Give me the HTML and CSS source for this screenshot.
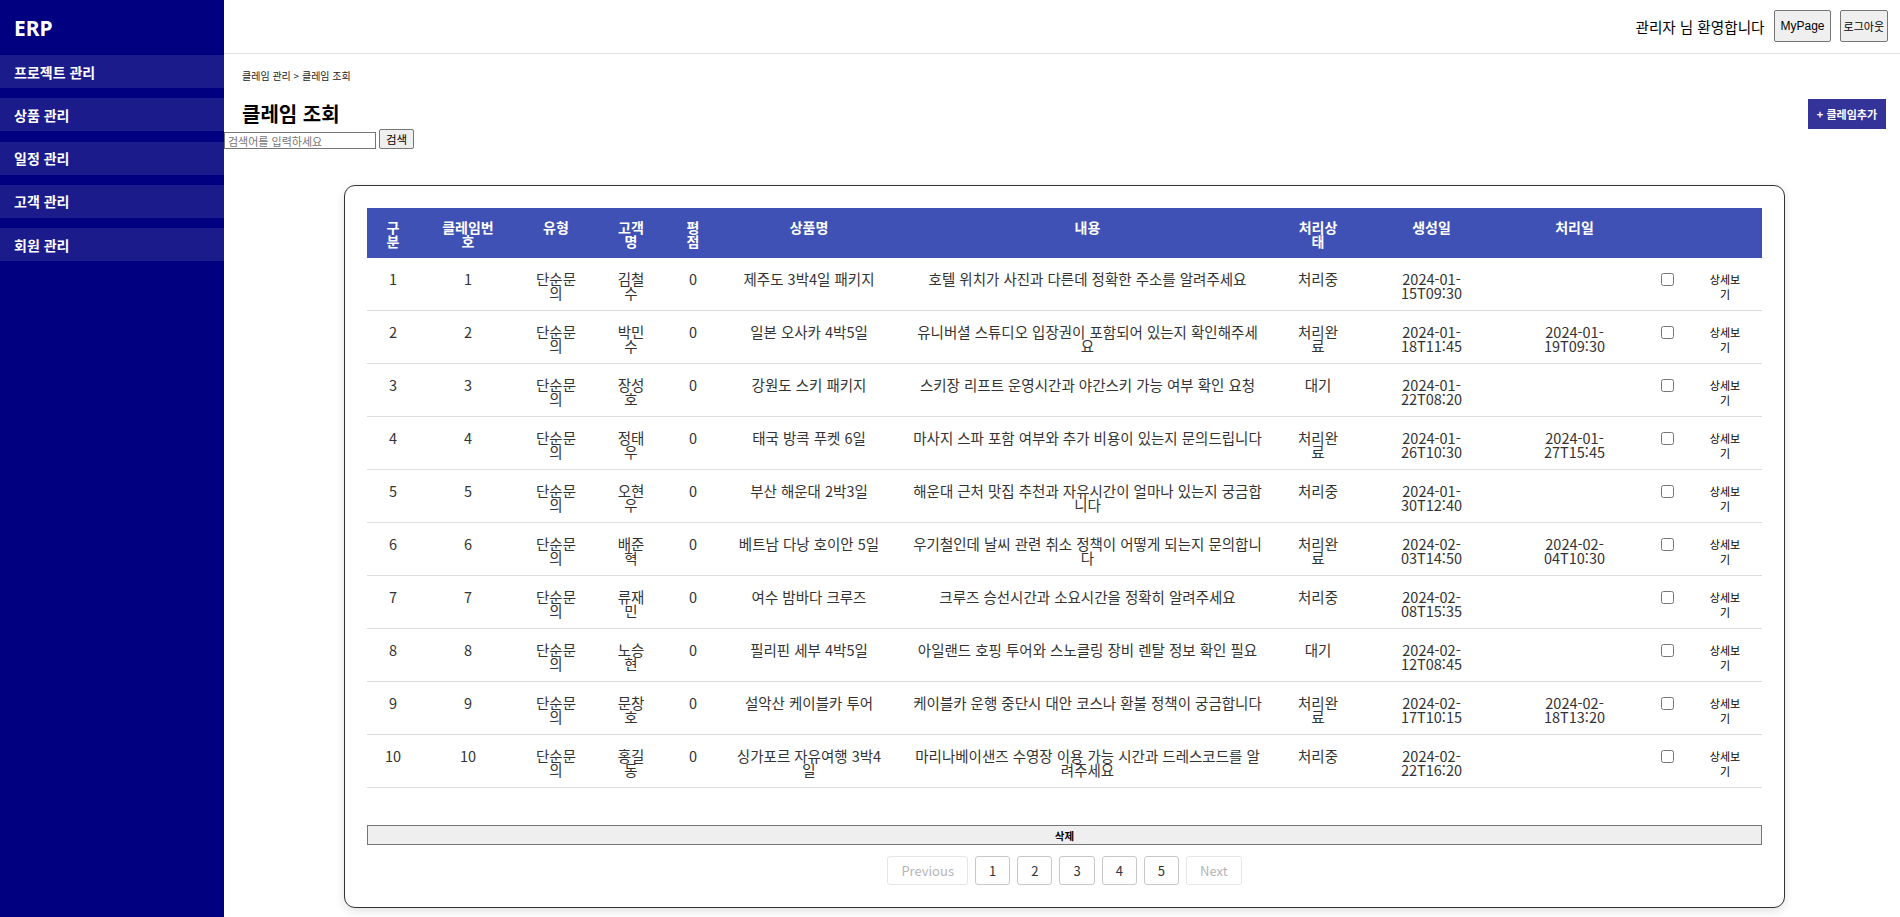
FILE: index.html
```html
<!DOCTYPE html>
<html lang="ko">
<head>
<meta charset="utf-8">
<title>클레임 조회</title>
<link rel="stylesheet" href="styles.css">
</head>
<body>
<aside class="sidebar">
  <div class="logo">ERP</div>
  <nav class="menu">
    <a class="menu-item">프로젝트 관리</a>
    <a class="menu-item">상품 관리</a>
    <a class="menu-item">일정 관리</a>
    <a class="menu-item">고객 관리</a>
    <a class="menu-item">회원 관리</a>
  </nav>
</aside>
<main class="main">
  <header class="topbar">
    <span class="welcome">관리자 님 환영합니다</span>
    <button class="top-btn">MyPage</button>
    <button class="top-btn top-btn-ko">로그아웃</button>
  </header>
  <section class="page-head">
    <div class="breadcrumb">클레임 관리 &gt; 클레임 조회</div>
    <div class="title-row">
      <h3 class="title">클레임 조회</h3>
      <button class="add-btn">+ 클레임추가</button>
    </div>
  </section>
  <form class="search">
    <input class="search-input" type="text" placeholder="검색어를 입력하세요">
    <button class="search-btn" type="button">검색</button>
  </form>
  <div class="card">
    <table class="claims">
      <thead>
        <tr>
          <th>구분</th><th>클레임번호</th><th>유형</th><th>고객명</th><th>평점</th><th>상품명</th><th>내용</th><th>처리상태</th><th>생성일</th><th>처리일</th><th></th><th></th>
        </tr>
      </thead>
      <tbody>
        <tr><td>1</td><td>1</td><td>단순문의</td><td>김철수</td><td>0</td><td>제주도 3박4일 패키지</td><td>호텔 위치가 사진과 다른데 정확한 주소를 알려주세요</td><td>처리중</td><td>2024-01-15T09:30</td><td></td><td><input type="checkbox" class="chk"></td><td><button class="detail">상세보기</button></td></tr>
        <tr><td>2</td><td>2</td><td>단순문의</td><td>박민수</td><td>0</td><td>일본 오사카 4박5일</td><td>유니버셜 스튜디오 입장권이 포함되어 있는지 확인해주세요</td><td>처리완료</td><td>2024-01-18T11:45</td><td>2024-01-19T09:30</td><td><input type="checkbox" class="chk"></td><td><button class="detail">상세보기</button></td></tr>
        <tr><td>3</td><td>3</td><td>단순문의</td><td>장성호</td><td>0</td><td>강원도 스키 패키지</td><td>스키장 리프트 운영시간과 야간스키 가능 여부 확인 요청</td><td>대기</td><td>2024-01-22T08:20</td><td></td><td><input type="checkbox" class="chk"></td><td><button class="detail">상세보기</button></td></tr>
        <tr><td>4</td><td>4</td><td>단순문의</td><td>정태우</td><td>0</td><td>태국 방콕 푸켓 6일</td><td>마사지 스파 포함 여부와 추가 비용이 있는지 문의드립니다</td><td>처리완료</td><td>2024-01-26T10:30</td><td>2024-01-27T15:45</td><td><input type="checkbox" class="chk"></td><td><button class="detail">상세보기</button></td></tr>
        <tr><td>5</td><td>5</td><td>단순문의</td><td>오현우</td><td>0</td><td>부산 해운대 2박3일</td><td>해운대 근처 맛집 추천과 자유시간이 얼마나 있는지 궁금합니다</td><td>처리중</td><td>2024-01-30T12:40</td><td></td><td><input type="checkbox" class="chk"></td><td><button class="detail">상세보기</button></td></tr>
        <tr><td>6</td><td>6</td><td>단순문의</td><td>배준혁</td><td>0</td><td>베트남 다낭 호이안 5일</td><td>우기철인데 날씨 관련 취소 정책이 어떻게 되는지 문의합니다</td><td>처리완료</td><td>2024-02-03T14:50</td><td>2024-02-04T10:30</td><td><input type="checkbox" class="chk"></td><td><button class="detail">상세보기</button></td></tr>
        <tr><td>7</td><td>7</td><td>단순문의</td><td>류재민</td><td>0</td><td>여수 밤바다 크루즈</td><td>크루즈 승선시간과 소요시간을 정확히 알려주세요</td><td>처리중</td><td>2024-02-08T15:35</td><td></td><td><input type="checkbox" class="chk"></td><td><button class="detail">상세보기</button></td></tr>
        <tr><td>8</td><td>8</td><td>단순문의</td><td>노승현</td><td>0</td><td>필리핀 세부 4박5일</td><td>아일랜드 호핑 투어와 스노클링 장비 렌탈 정보 확인 필요</td><td>대기</td><td>2024-02-12T08:45</td><td></td><td><input type="checkbox" class="chk"></td><td><button class="detail">상세보기</button></td></tr>
        <tr><td>9</td><td>9</td><td>단순문의</td><td>문창호</td><td>0</td><td>설악산 케이블카 투어</td><td>케이블카 운행 중단시 대안 코스나 환불 정책이 궁금합니다</td><td>처리완료</td><td>2024-02-17T10:15</td><td>2024-02-18T13:20</td><td><input type="checkbox" class="chk"></td><td><button class="detail">상세보기</button></td></tr>
        <tr><td>10</td><td>10</td><td>단순문의</td><td>홍길동</td><td>0</td><td>싱가포르 자유여행 3박4일</td><td>마리나베이샌즈 수영장 이용 가능 시간과 드레스코드를 알려주세요</td><td>처리중</td><td>2024-02-22T16:20</td><td></td><td><input type="checkbox" class="chk"></td><td><button class="detail">상세보기</button></td></tr>
      </tbody>
    </table>
    <button class="delete-btn">삭제</button>
    <div class="pager">
      <button class="page-btn disabled">Previous</button>
      <button class="page-btn">1</button>
      <button class="page-btn">2</button>
      <button class="page-btn">3</button>
      <button class="page-btn">4</button>
      <button class="page-btn">5</button>
      <button class="page-btn disabled">Next</button>
    </div>
  </div>
</main>
</body>
</html>
```

FILE: styles.css
```css
* { box-sizing: border-box; }

html, body {
  margin: 0;
  padding: 0;
  height: 100%;
}

body {
  display: flex;
  font-family: "Noto Sans CJK KR", "Noto Sans", sans-serif;
  color: #000;
  background: #fff;
  overflow: hidden;
}

/* Sidebar */
.sidebar {
  width: 224px;
  flex: 0 0 224px;
  height: 917px;
  background: #000080;
  color: #fff;
}

.logo {
  height: 55px;
  display: flex;
  align-items: center;
  padding-left: 14px;
  font-family: "Noto Sans", sans-serif;
  font-size: 21px;
  font-weight: 700;
}

.menu {
  display: flex;
  flex-direction: column;
  gap: 10.3px;
}

.menu-item {
  height: 33px;
  display: flex;
  align-items: center;
  padding-left: 14px;
  background: #1b1b8b;
  color: #fff;
  font-size: 14px;
  font-weight: 700;
}

/* Main */
.main {
  flex: 1;
  min-width: 0;
}

.topbar {
  height: 54px;
  display: flex;
  justify-content: flex-end;
  align-items: center;
  padding-right: 12px;
  padding-bottom: 1px;
  border-bottom: 1px solid #e2e2e2;
}

.welcome {
  font-size: 14.6px;
  margin-right: 10px;
}

.top-btn {
  height: 32px;
  padding: 0 5px;
  font-family: "Liberation Sans", "Noto Sans CJK KR", sans-serif;
  font-size: 12px;
  color: #000;
  background: #efefef;
  border: 1px solid #767676;
  border-radius: 2px;
}

.top-btn-ko {
  margin-left: 9px;
  font-family: "Noto Sans CJK KR", sans-serif;
  font-size: 11px;
  padding: 0 3px;
}

.page-head {
  padding: 15px 14px 0 18px;
}

.breadcrumb {
  font-size: 10px;
  line-height: 14px;
  color: #222;
  margin-bottom: 16px;
}

.title-row {
  display: flex;
  justify-content: space-between;
  align-items: center;
  height: 30px;
}

.title {
  margin: 0;
  font-size: 20px;
  font-weight: 700;
  line-height: 24px;
}

.add-btn {
  height: 30px;
  padding: 0 9px;
  background: #333399;
  color: #fff;
  border: none;
  font-family: "Noto Sans CJK KR", sans-serif;
  font-size: 11px;
  font-weight: 700;
}

.search {
  display: flex;
  align-items: flex-end;
  gap: 3px;
  margin: 0;
  height: 20px;
}

.search-input {
  width: 152px;
  height: 17px;
  padding: 0 3px;
  border: 1px solid #767676;
  font-family: "Noto Sans CJK KR", sans-serif;
  font-size: 11px;
  margin: 0;
}

.search-input::placeholder {
  color: #757575;
}

.search-btn {
  height: 20px;
  padding: 0 6px;
  margin: 0;
  background: #efefef;
  border: 1px solid #767676;
  border-radius: 2px;
  font-family: "Noto Sans CJK KR", sans-serif;
  font-size: 11.5px;
  color: #000;
  line-height: 18px;
}

/* Card */
.card {
  width: 1441px;
  margin: 36px 0 0 120px;
  padding: 22px;
  border: 1px solid #333;
  border-radius: 11px;
  background: #fff;
  box-shadow: 0 3px 10px rgba(0, 0, 0, 0.12);
}

.claims {
  width: 100%;
  table-layout: fixed;
  border-collapse: collapse;
}

.claims th {
  background: #3f51b5;
  color: #fff;
  font-size: 14px;
  font-weight: 700;
  line-height: 14px;
  padding: 12px 18px 10px;
  vertical-align: top;
  text-align: center;
  height: 50px;
}

.claims td {
  font-size: 14.5px;
  line-height: 13.5px;
  color: #333;
  padding: 14px 18px 11px;
  vertical-align: top;
  text-align: center;
  border-bottom: 1px solid #dddddd;
}

.claims th:nth-child(1) { width: 52px; }
.claims th:nth-child(2) { width: 98px; }
.claims th:nth-child(3) { width: 78px; }
.claims th:nth-child(4) { width: 72px; }
.claims th:nth-child(5) { width: 52px; }
.claims th:nth-child(6) { width: 180px; }
.claims th:nth-child(7) { width: 377px; }
.claims th:nth-child(8) { width: 84px; }
.claims th:nth-child(9) { width: 143px; }
.claims th:nth-child(10) { width: 143px; }
.claims th:nth-child(11) { width: 42px; }
.claims th:nth-child(12) { width: 74px; }

.claims td:nth-child(1),
.claims th:nth-child(1) {
  padding-left: 17px;
  padding-right: 17px;
}

.claims td:nth-child(6),
.claims th:nth-child(6) {
  padding-left: 16px;
  padding-right: 16px;
}

.claims td:nth-child(7),
.claims th:nth-child(7) {
  padding-left: 12.5px;
  padding-right: 12.5px;
}

.claims td:nth-child(9),
.claims td:nth-child(10) {
  padding-left: 25px;
  padding-right: 25px;
}

.claims td:nth-child(11) {
  padding-left: 0;
  padding-right: 0;
}

.claims td:nth-child(12) {
  padding-bottom: 6px;
}

.chk {
  margin: 1px 0 0;
  width: 13px;
  height: 13px;
}

.detail {
  background: none;
  border: none;
  padding: 0;
  font-family: "Noto Sans CJK KR", sans-serif;
  font-size: 11px;
  line-height: 15px;
  color: #000;
}

.delete-btn {
  display: block;
  width: 100%;
  height: 20px;
  margin-top: 37px;
  padding: 0;
  background: #efefef;
  border: 1px solid #767676;
  font-family: "Noto Sans CJK KR", sans-serif;
  font-size: 10.5px;
  font-weight: 700;
  color: #000;
}

.pager {
  display: flex;
  justify-content: center;
  gap: 7px;
  margin-top: 11px;
}

.page-btn {
  height: 29px;
  padding: 0 13px;
  background: #fff;
  border: 1px solid #c8c8c8;
  border-radius: 3px;
  font-family: "Noto Sans CJK KR", "Noto Sans", sans-serif;
  font-size: 13px;
  color: #333;
}

.page-btn.disabled {
  color: #b5b5b5;
  border-color: #e6e6e6;
}
```
